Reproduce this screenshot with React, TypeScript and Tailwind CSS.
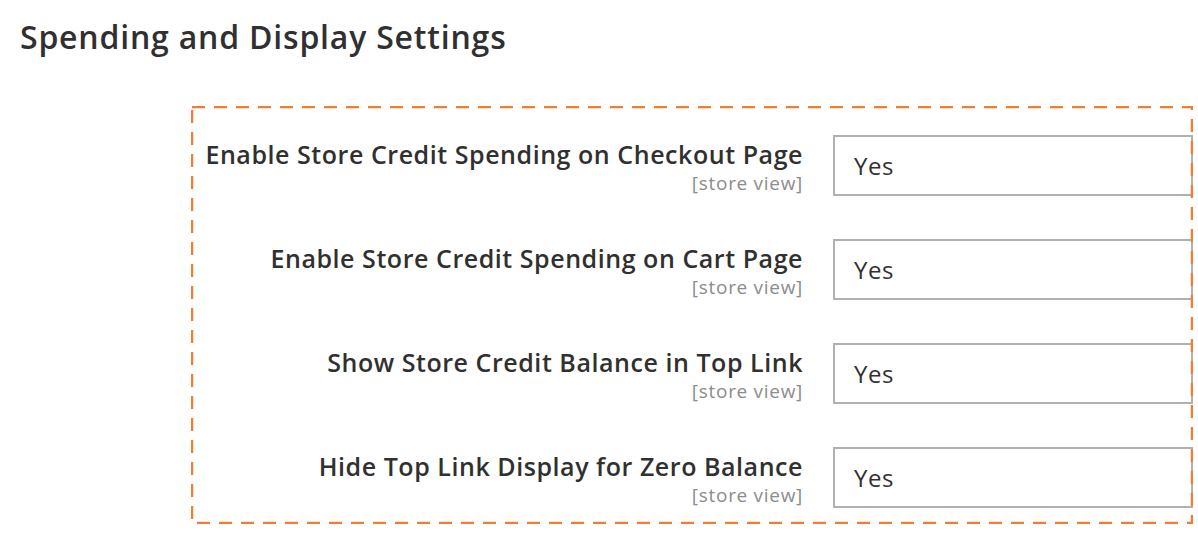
const rows = [
  'Enable Store Credit Spending on Checkout Page',
  'Enable Store Credit Spending on Cart Page',
  'Show Store Credit Balance in Top Link',
  'Hide Top Link Display for Zero Balance',
];

export default function App() {
  return (
    <div className="w-[1198px] h-[552px] bg-white overflow-hidden font-['Open_Sans',sans-serif] text-[#303030]">
      <h2 className="pl-[20px] pt-[17px] text-[32px] leading-[40px] font-semibold tracking-[0.8px]">Spending and Display Settings</h2>

      <div className="relative ml-[191px] mt-[49px] w-[1002px] h-[418px] pt-[29px]">
        {/* dashed highlight frame */}
        <svg className="absolute inset-0 pointer-events-none z-10" width="1002" height="418">
          <rect x="1" y="1" width="1000" height="416" fill="none" stroke="#ef7d32" strokeWidth="2.5" strokeDasharray="13 9" />
        </svg>

        <div className="flex flex-col gap-[43px]">
          {rows.map((label) => (
            <div key={label} className="flex items-start h-[61px]">
              <div className="w-[642px] pr-[30px] pt-[2px] text-right">
                <div className="text-[25px] leading-[34px] font-semibold tracking-[0.55px]">{label}</div>
                <div className="text-[19px] leading-[25px] text-[#8c8c8c] tracking-[0.7px]">[store view]</div>
              </div>
              <div className="w-[360px] h-[61px] border-2 border-[#b0b0b0] flex items-center pl-[19px] text-[24px] tracking-[0.5px]">
                Yes
              </div>
            </div>
          ))}
        </div>
      </div>
    </div>
  );
}
